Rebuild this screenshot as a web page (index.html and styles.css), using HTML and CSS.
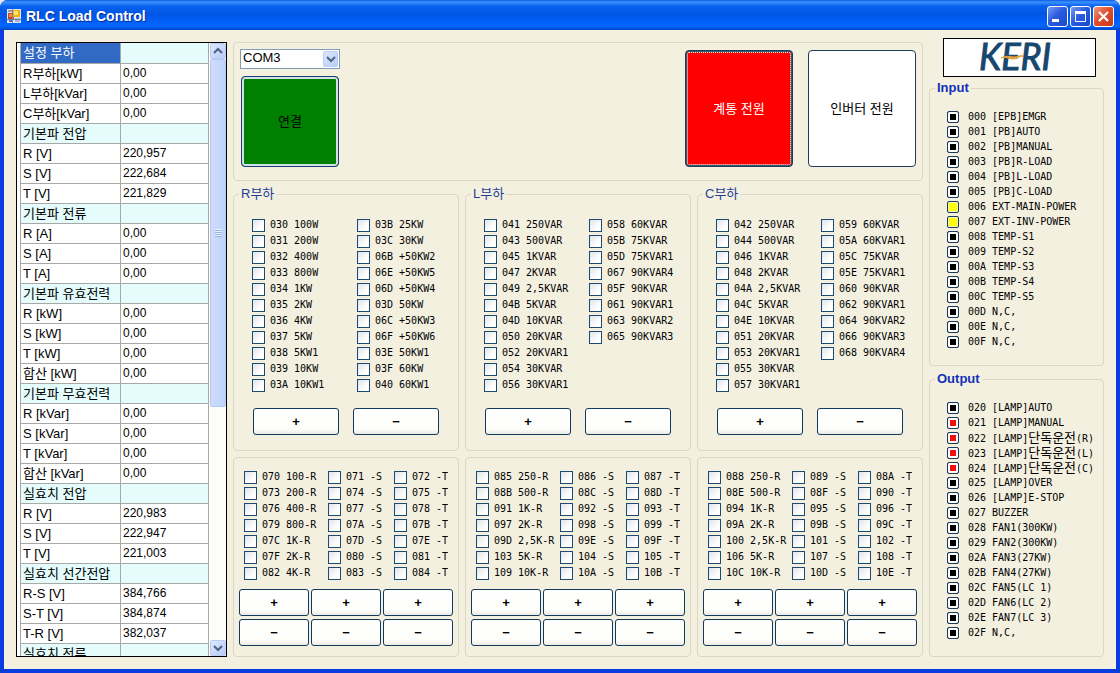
FILE: index.html
```html
<!DOCTYPE html>
<html lang="ko">
<head>
<meta charset="utf-8">
<title>RLC Load Control</title>
<link rel="stylesheet" href="styles.css">
</head>
<body>
<div class="window">
  <header class="titlebar">
    <svg class="app-icon" viewBox="0 0 14 14" aria-hidden="true">
      <rect width="14" height="14" fill="#dfe6f2"/>
      <rect x="1" y="4" width="6" height="6" fill="#c8401c"/>
      <rect x="2" y="5" width="3" height="3" fill="#f08a50"/>
      <rect x="6" y="1" width="7" height="7" fill="#f0b400"/>
      <rect x="7" y="2" width="4" height="4" fill="#ffe27a"/>
      <rect x="1" y="1" width="4" height="2" fill="#8e9cb8"/>
      <rect x="2" y="11" width="4" height="2" fill="#4a6fc0"/>
      <rect x="8" y="9" width="5" height="4" fill="#a8b4cc"/>
      <path d="M5.5 0v14M0 10.500h14" stroke="#7484a8" fill="none"/>
    </svg>
    <h1 class="title">RLC Load Control</h1>
    <div class="window-buttons">
      <button class="win-btn" type="button" aria-label="Minimize"><svg viewBox="0 0 19 19"><rect x="4" y="12" width="7" height="3" fill="#fff"/></svg></button>
      <button class="win-btn" type="button" aria-label="Maximize"><svg viewBox="0 0 19 19"><path d="M4.5 4v10.500h10V4" fill="none" stroke="#fff"/><rect x="4" y="4" width="11" height="3" fill="#fff"/></svg></button>
      <button class="win-btn close" type="button" aria-label="Close"><svg viewBox="0 0 19 19"><path d="M5 5l9 9M14 5l-9 9" fill="none" stroke="#fff" stroke-width="2.2"/></svg></button>
    </div>
  </header>

  <main class="content">
    <section class="grid-view">
      <div class="table-pane">
        <table class="measures">
          <tbody>
            <tr class="head selected"><td>설정 부하</td><td></td></tr>
            <tr><td>R부하[kW]</td><td>0,00</td></tr>
            <tr><td>L부하[kVar]</td><td>0,00</td></tr>
            <tr><td>C부하[kVar]</td><td>0,00</td></tr>
            <tr class="head"><td>기본파 전압</td><td></td></tr>
            <tr><td>R [V]</td><td>220,957</td></tr>
            <tr><td>S [V]</td><td>222,684</td></tr>
            <tr><td>T [V]</td><td>221,829</td></tr>
            <tr class="head"><td>기본파 전류</td><td></td></tr>
            <tr><td>R [A]</td><td>0,00</td></tr>
            <tr><td>S [A]</td><td>0,00</td></tr>
            <tr><td>T [A]</td><td>0,00</td></tr>
            <tr class="head"><td>기본파 유효전력</td><td></td></tr>
            <tr><td>R [kW]</td><td>0,00</td></tr>
            <tr><td>S [kW]</td><td>0,00</td></tr>
            <tr><td>T [kW]</td><td>0,00</td></tr>
            <tr><td>합산 [kW]</td><td>0,00</td></tr>
            <tr class="head"><td>기본파 무효전력</td><td></td></tr>
            <tr><td>R [kVar]</td><td>0,00</td></tr>
            <tr><td>S [kVar]</td><td>0,00</td></tr>
            <tr><td>T [kVar]</td><td>0,00</td></tr>
            <tr><td>합산 [kVar]</td><td>0,00</td></tr>
            <tr class="head"><td>실효치 전압</td><td></td></tr>
            <tr><td>R [V]</td><td>220,983</td></tr>
            <tr><td>S [V]</td><td>222,947</td></tr>
            <tr><td>T [V]</td><td>221,003</td></tr>
            <tr class="head"><td>실효치 선간전압</td><td></td></tr>
            <tr><td>R-S [V]</td><td>384,766</td></tr>
            <tr><td>S-T [V]</td><td>384,874</td></tr>
            <tr><td>T-R [V]</td><td>382,037</td></tr>
            <tr class="head"><td>실효치 전류</td><td></td></tr>
          </tbody>
        </table>
      </div>
      <div class="scrollbar">
        <button class="scroll-btn" type="button" aria-label="Scroll up"><svg viewBox="0 0 10 8"><path d="M1 6l4-4 4 4" fill="none" stroke="#4d6185" stroke-width="2"/></svg></button>
        <div class="thumb"><span class="grip"></span></div>
        <div class="track"></div>
        <button class="scroll-btn" type="button" aria-label="Scroll down"><svg viewBox="0 0 10 8"><path d="M1 2l4 4 4-4" fill="none" stroke="#4d6185" stroke-width="2"/></svg></button>
      </div>
    </section>

    <div class="center">
      <section class="panel power">
        <div class="connect">
          <div class="combo">
            <select aria-label="COM port"><option>COM3</option></select>
            <span class="combo-arrow"><svg viewBox="0 0 10 8"><path d="M1 2l4 4 4-4" fill="none" stroke="#4d6185" stroke-width="2"/></svg></span>
          </div>
          <button class="big green" type="button">연결</button>
        </div>
        <div class="sources">
          <button class="big red" type="button">계통 전원</button>
          <button class="big white" type="button">인버터 전원</button>
        </div>
      </section>

      <div class="loads">
        <fieldset class="panel group">
          <legend>R부하</legend>
          <div class="two-cols">
            <div>
              <label class="opt"><input type="checkbox">030 100W</label>
              <label class="opt"><input type="checkbox">031 200W</label>
              <label class="opt"><input type="checkbox">032 400W</label>
              <label class="opt"><input type="checkbox">033 800W</label>
              <label class="opt"><input type="checkbox">034 1KW</label>
              <label class="opt"><input type="checkbox">035 2KW</label>
              <label class="opt"><input type="checkbox">036 4KW</label>
              <label class="opt"><input type="checkbox">037 5KW</label>
              <label class="opt"><input type="checkbox">038 5KW1</label>
              <label class="opt"><input type="checkbox">039 10KW</label>
              <label class="opt"><input type="checkbox">03A 10KW1</label>
            </div>
            <div>
              <label class="opt"><input type="checkbox">03B 25KW</label>
              <label class="opt"><input type="checkbox">03C 30KW</label>
              <label class="opt"><input type="checkbox">06B +50KW2</label>
              <label class="opt"><input type="checkbox">06E +50KW5</label>
              <label class="opt"><input type="checkbox">06D +50KW4</label>
              <label class="opt"><input type="checkbox">03D 50KW</label>
              <label class="opt"><input type="checkbox">06C +50KW3</label>
              <label class="opt"><input type="checkbox">06F +50KW6</label>
              <label class="opt"><input type="checkbox">03E 50KW1</label>
              <label class="opt"><input type="checkbox">03F 60KW</label>
              <label class="opt"><input type="checkbox">040 60KW1</label>
            </div>
          </div>
          <div class="pair"><button class="step" type="button">+</button><button class="step" type="button">−</button></div>
        </fieldset>

        <fieldset class="panel group">
          <legend>L부하</legend>
          <div class="two-cols">
            <div>
              <label class="opt"><input type="checkbox">041 250VAR</label>
              <label class="opt"><input type="checkbox">043 500VAR</label>
              <label class="opt"><input type="checkbox">045 1KVAR</label>
              <label class="opt"><input type="checkbox">047 2KVAR</label>
              <label class="opt"><input type="checkbox">049 2,5KVAR</label>
              <label class="opt"><input type="checkbox">04B 5KVAR</label>
              <label class="opt"><input type="checkbox">04D 10KVAR</label>
              <label class="opt"><input type="checkbox">050 20KVAR</label>
              <label class="opt"><input type="checkbox">052 20KVAR1</label>
              <label class="opt"><input type="checkbox">054 30KVAR</label>
              <label class="opt"><input type="checkbox">056 30KVAR1</label>
            </div>
            <div>
              <label class="opt"><input type="checkbox">058 60KVAR</label>
              <label class="opt"><input type="checkbox">05B 75KVAR</label>
              <label class="opt"><input type="checkbox">05D 75KVAR1</label>
              <label class="opt"><input type="checkbox">067 90KVAR4</label>
              <label class="opt"><input type="checkbox">05F 90KVAR</label>
              <label class="opt"><input type="checkbox">061 90KVAR1</label>
              <label class="opt"><input type="checkbox">063 90KVAR2</label>
              <label class="opt"><input type="checkbox">065 90KVAR3</label>
            </div>
          </div>
          <div class="pair"><button class="step" type="button">+</button><button class="step" type="button">−</button></div>
        </fieldset>

        <fieldset class="panel group">
          <legend>C부하</legend>
          <div class="two-cols">
            <div>
              <label class="opt"><input type="checkbox">042 250VAR</label>
              <label class="opt"><input type="checkbox">044 500VAR</label>
              <label class="opt"><input type="checkbox">046 1KVAR</label>
              <label class="opt"><input type="checkbox">048 2KVAR</label>
              <label class="opt"><input type="checkbox">04A 2,5KVAR</label>
              <label class="opt"><input type="checkbox">04C 5KVAR</label>
              <label class="opt"><input type="checkbox">04E 10KVAR</label>
              <label class="opt"><input type="checkbox">051 20KVAR</label>
              <label class="opt"><input type="checkbox">053 20KVAR1</label>
              <label class="opt"><input type="checkbox">055 30KVAR</label>
              <label class="opt"><input type="checkbox">057 30KVAR1</label>
            </div>
            <div>
              <label class="opt"><input type="checkbox">059 60KVAR</label>
              <label class="opt"><input type="checkbox">05A 60KVAR1</label>
              <label class="opt"><input type="checkbox">05C 75KVAR</label>
              <label class="opt"><input type="checkbox">05E 75KVAR1</label>
              <label class="opt"><input type="checkbox">060 90KVAR</label>
              <label class="opt"><input type="checkbox">062 90KVAR1</label>
              <label class="opt"><input type="checkbox">064 90KVAR2</label>
              <label class="opt"><input type="checkbox">066 90KVAR3</label>
              <label class="opt"><input type="checkbox">068 90KVAR4</label>
            </div>
          </div>
          <div class="pair"><button class="step" type="button">+</button><button class="step" type="button">−</button></div>
        </fieldset>
      </div>

      <div class="loads phases">
        <section class="panel phase">
          <div class="three-cols">
            <div>
              <label class="opt"><input type="checkbox">070 100-R</label>
              <label class="opt"><input type="checkbox">073 200-R</label>
              <label class="opt"><input type="checkbox">076 400-R</label>
              <label class="opt"><input type="checkbox">079 800-R</label>
              <label class="opt"><input type="checkbox">07C 1K-R</label>
              <label class="opt"><input type="checkbox">07F 2K-R</label>
              <label class="opt"><input type="checkbox">082 4K-R</label>
            </div>
            <div>
              <label class="opt"><input type="checkbox">071 -S</label>
              <label class="opt"><input type="checkbox">074 -S</label>
              <label class="opt"><input type="checkbox">077 -S</label>
              <label class="opt"><input type="checkbox">07A -S</label>
              <label class="opt"><input type="checkbox">07D -S</label>
              <label class="opt"><input type="checkbox">080 -S</label>
              <label class="opt"><input type="checkbox">083 -S</label>
            </div>
            <div>
              <label class="opt"><input type="checkbox">072 -T</label>
              <label class="opt"><input type="checkbox">075 -T</label>
              <label class="opt"><input type="checkbox">078 -T</label>
              <label class="opt"><input type="checkbox">07B -T</label>
              <label class="opt"><input type="checkbox">07E -T</label>
              <label class="opt"><input type="checkbox">081 -T</label>
              <label class="opt"><input type="checkbox">084 -T</label>
            </div>
          </div>
          <div class="six">
            <button class="step" type="button">+</button><button class="step" type="button">+</button><button class="step" type="button">+</button>
            <button class="step" type="button">−</button><button class="step" type="button">−</button><button class="step" type="button">−</button>
          </div>
        </section>

        <section class="panel phase">
          <div class="three-cols">
            <div>
              <label class="opt"><input type="checkbox">085 250-R</label>
              <label class="opt"><input type="checkbox">08B 500-R</label>
              <label class="opt"><input type="checkbox">091 1K-R</label>
              <label class="opt"><input type="checkbox">097 2K-R</label>
              <label class="opt"><input type="checkbox">09D 2,5K-R</label>
              <label class="opt"><input type="checkbox">103 5K-R</label>
              <label class="opt"><input type="checkbox">109 10K-R</label>
            </div>
            <div>
              <label class="opt"><input type="checkbox">086 -S</label>
              <label class="opt"><input type="checkbox">08C -S</label>
              <label class="opt"><input type="checkbox">092 -S</label>
              <label class="opt"><input type="checkbox">098 -S</label>
              <label class="opt"><input type="checkbox">09E -S</label>
              <label class="opt"><input type="checkbox">104 -S</label>
              <label class="opt"><input type="checkbox">10A -S</label>
            </div>
            <div>
              <label class="opt"><input type="checkbox">087 -T</label>
              <label class="opt"><input type="checkbox">08D -T</label>
              <label class="opt"><input type="checkbox">093 -T</label>
              <label class="opt"><input type="checkbox">099 -T</label>
              <label class="opt"><input type="checkbox">09F -T</label>
              <label class="opt"><input type="checkbox">105 -T</label>
              <label class="opt"><input type="checkbox">10B -T</label>
            </div>
          </div>
          <div class="six">
            <button class="step" type="button">+</button><button class="step" type="button">+</button><button class="step" type="button">+</button>
            <button class="step" type="button">−</button><button class="step" type="button">−</button><button class="step" type="button">−</button>
          </div>
        </section>

        <section class="panel phase">
          <div class="three-cols">
            <div>
              <label class="opt"><input type="checkbox">088 250-R</label>
              <label class="opt"><input type="checkbox">08E 500-R</label>
              <label class="opt"><input type="checkbox">094 1K-R</label>
              <label class="opt"><input type="checkbox">09A 2K-R</label>
              <label class="opt"><input type="checkbox">100 2,5K-R</label>
              <label class="opt"><input type="checkbox">106 5K-R</label>
              <label class="opt"><input type="checkbox">10C 10K-R</label>
            </div>
            <div>
              <label class="opt"><input type="checkbox">089 -S</label>
              <label class="opt"><input type="checkbox">08F -S</label>
              <label class="opt"><input type="checkbox">095 -S</label>
              <label class="opt"><input type="checkbox">09B -S</label>
              <label class="opt"><input type="checkbox">101 -S</label>
              <label class="opt"><input type="checkbox">107 -S</label>
              <label class="opt"><input type="checkbox">10D -S</label>
            </div>
            <div>
              <label class="opt"><input type="checkbox">08A -T</label>
              <label class="opt"><input type="checkbox">090 -T</label>
              <label class="opt"><input type="checkbox">096 -T</label>
              <label class="opt"><input type="checkbox">09C -T</label>
              <label class="opt"><input type="checkbox">102 -T</label>
              <label class="opt"><input type="checkbox">108 -T</label>
              <label class="opt"><input type="checkbox">10E -T</label>
            </div>
          </div>
          <div class="six">
            <button class="step" type="button">+</button><button class="step" type="button">+</button><button class="step" type="button">+</button>
            <button class="step" type="button">−</button><button class="step" type="button">−</button><button class="step" type="button">−</button>
          </div>
        </section>
      </div>
    </div>

    <aside class="side">
      <div class="logo">
        <svg viewBox="0 0 151 37" role="img" aria-label="KERI">
          <text class="logo-text" x="35" y="31">KERI</text>
          <path d="M57 19c5-3 9-1 13-1s5-2 9-1c-4 0-5 3-10 3s-7-3-12-1z" fill="#e8a33c" stroke="#e8a33c"/>
        </svg>
      </div>
      <fieldset class="panel io">
        <legend>Input</legend>
        <label class="lamp"><input type="checkbox" checked>000 [EPB]EMGR</label>
        <label class="lamp"><input type="checkbox" checked>001 [PB]AUTO</label>
        <label class="lamp"><input type="checkbox" checked>002 [PB]MANUAL</label>
        <label class="lamp"><input type="checkbox" checked>003 [PB]R-LOAD</label>
        <label class="lamp"><input type="checkbox" checked>004 [PB]L-LOAD</label>
        <label class="lamp"><input type="checkbox" checked>005 [PB]C-LOAD</label>
        <label class="lamp yellow"><input type="checkbox" checked>006 EXT-MAIN-POWER</label>
        <label class="lamp yellow"><input type="checkbox" checked>007 EXT-INV-POWER</label>
        <label class="lamp"><input type="checkbox" checked>008 TEMP-S1</label>
        <label class="lamp"><input type="checkbox" checked>009 TEMP-S2</label>
        <label class="lamp"><input type="checkbox" checked>00A TEMP-S3</label>
        <label class="lamp"><input type="checkbox" checked>00B TEMP-S4</label>
        <label class="lamp"><input type="checkbox" checked>00C TEMP-S5</label>
        <label class="lamp"><input type="checkbox" checked>00D N,C,</label>
        <label class="lamp"><input type="checkbox" checked>00E N,C,</label>
        <label class="lamp"><input type="checkbox" checked>00F N,C,</label>
      </fieldset>
      <fieldset class="panel io">
        <legend>Output</legend>
        <label class="lamp"><input type="checkbox" checked>020 [LAMP]AUTO</label>
        <label class="lamp alert"><input type="checkbox" checked>021 [LAMP]MANUAL</label>
        <label class="lamp alert"><input type="checkbox" checked><span>022 [LAMP]<span class="ko">단독운전</span>(R)</span></label>
        <label class="lamp alert"><input type="checkbox" checked><span>023 [LAMP]<span class="ko">단독운전</span>(L)</span></label>
        <label class="lamp alert"><input type="checkbox" checked><span>024 [LAMP]<span class="ko">단독운전</span>(C)</span></label>
        <label class="lamp"><input type="checkbox" checked>025 [LAMP]OVER</label>
        <label class="lamp"><input type="checkbox" checked>026 [LAMP]E-STOP</label>
        <label class="lamp"><input type="checkbox" checked>027 BUZZER</label>
        <label class="lamp"><input type="checkbox" checked>028 FAN1(300KW)</label>
        <label class="lamp"><input type="checkbox" checked>029 FAN2(300KW)</label>
        <label class="lamp"><input type="checkbox" checked>02A FAN3(27KW)</label>
        <label class="lamp"><input type="checkbox" checked>02B FAN4(27KW)</label>
        <label class="lamp"><input type="checkbox" checked>02C FAN5(LC 1)</label>
        <label class="lamp"><input type="checkbox" checked>02D FAN6(LC 2)</label>
        <label class="lamp"><input type="checkbox" checked>02E FAN7(LC 3)</label>
        <label class="lamp"><input type="checkbox" checked>02F N,C,</label>
      </fieldset>
    </aside>
  </main>
</div>
</body>
</html>
```

FILE: styles.css
```css
* { box-sizing: border-box; }

body {
  margin: 0;
  background: #e4e8f0;
  color: #000;
  font: 13px/16px "Liberation Sans", "Noto Sans CJK KR", sans-serif;
}

button, select, input { font: inherit; color: inherit; margin: 0; }
button { padding: 0; }

.window {
  display: flex;
  flex-direction: column;
  height: 100vh;
  min-height: 673px;
  border-radius: 8px 8px 0 0;
  overflow: hidden;
  background: #0a3ce0;
}

/* Title bar */
.titlebar {
  display: flex;
  align-items: center;
  flex: none;
  height: 30px;
  padding: 2px 6px 0 7px;
  background: linear-gradient(#0a5be0 0, #3c92ff 2px, #0a62ee 6px, #0055e5 14px, #0060fa 22px, #0066ff 26px, #0046c8 30px);
}
.app-icon { width: 14px; height: 14px; margin-right: 5px; }
.title {
  flex: 1;
  margin: 0;
  color: #fff;
  font-size: 14px;
  line-height: 18px;
  text-shadow: 1px 1px 0 #0a2c90;
}
.window-buttons { display: flex; gap: 2px; }
.win-btn {
  width: 21px;
  height: 21px;
  border: 1px solid #fff;
  border-radius: 3px;
  background: linear-gradient(135deg, #7a9cf0, #2a5ce0 45%, #1c48c8);
}
.win-btn.close { background: linear-gradient(135deg, #f09a80, #e05030 45%, #c83818); }
.win-btn svg { display: block; width: 19px; height: 19px; }

/* Client area */
.content {
  flex: 1;
  display: grid;
  grid-template-columns: 211px minmax(0, 1fr) 175px;
  grid-template-rows: minmax(0, 1fr);
  gap: 6px;
  min-height: 0;
  margin: 0 4px 4px;
  padding: 8px 12px 12px;
  background: #f4f0e0;
}

/* Measurement table */
.grid-view {
  display: flex;
  min-height: 0;
  margin-top: 4px;
  border: 1px solid #000;
  background: #fff;
}
.table-pane { flex: 1; overflow: hidden; padding: 0 1px 0 3px; }
.measures { width: 100%; border-collapse: collapse; table-layout: fixed; }
.measures td {
  height: 20px;
  padding: 0 2px;
  border: 1px solid #a8a8a4;
  border-top: 0;
  line-height: 19px;
  white-space: nowrap;
}
.measures td:first-child { width: 100px; }
.measures td:last-child { font-size: 12px; }
.measures .head td { background: #e4fcfc; }
.measures .selected td:first-child { background: #316ac5; color: #fff; }

.scrollbar { display: flex; flex-direction: column; flex: none; width: 16px; background: #fdfdfa; }
.scroll-btn, .combo-arrow {
  display: grid;
  place-items: center;
  flex: none;
  border: 1px solid #b8ccf4;
  border-radius: 2px;
  background: linear-gradient(135deg, #dce8ff, #b8ccf8);
}
.scroll-btn { height: 16px; }
.scroll-btn svg, .combo-arrow svg { width: 10px; height: 8px; }
.thumb {
  flex: 348 1 0;
  display: grid;
  place-items: center;
  border: 1px solid #b4c8f4;
  border-radius: 2px;
  background: linear-gradient(90deg, #d0dcfc, #bcd4fc);
}
.track { flex: 234 1 0; }
.grip {
  width: 7px;
  height: 8px;
  background: repeating-linear-gradient(#eef4ff 0 1px, #98b0e8 1px 2px);
}

/* Panels */
.panel {
  min-width: 0;
  margin: 0;
  border: 1px solid #dcd6c2;
  border-radius: 4px;
}
.center { display: flex; flex-direction: column; gap: 6px; margin-top: 4px; }

.power { display: flex; justify-content: space-between; padding: 6px 6px 13px; }
.connect { display: flex; flex-direction: column; gap: 7px; width: 100px; }
.combo { display: grid; grid-template-columns: 1fr 17px; align-items: center; }
.combo select {
  grid-area: 1 / 1 / 2 / 3;
  appearance: none;
  width: 100%;
  height: 20px;
  padding: 0 2px 2px;
  border: 1px solid #7f9db9;
  border-radius: 0;
  background: #fff;
}
.combo-arrow { grid-area: 1 / 2; width: 15px; height: 16px; pointer-events: none; }

.big {
  border: 1px solid #1c3c5c;
  border-radius: 4px;
}
.green {
  flex: 1;
  margin: 0 1px;
  background: #008000;
  border-color: #1c3c70;
  box-shadow: inset 0 0 0 2px #cfe2e8;
}
.sources { display: flex; gap: 15px; }
.sources .big { width: 108px; height: 117px; margin-top: 1px; }
.red { background: #f00; color: #fff; box-shadow: inset 0 0 0 1px #2a6070; outline: 1px dotted #fff; outline-offset: -3px; }
.white { background: #fff; }

.loads { display: grid; grid-template-columns: repeat(3, minmax(0, 1fr)); gap: 6px; }
.group { padding: 16px 19px 15px 18px; }
.group legend { padding: 0 2px; margin-left: -13px; color: #1c3f94; line-height: 14px; }
.two-cols { display: grid; grid-template-columns: 105px 1fr; }
.three-cols { display: grid; grid-template-columns: 84px 66px 1fr; padding-left: 5px; }
.pair { display: grid; grid-template-columns: 1fr 1fr; gap: 14px; margin-top: 15px; padding-left: 1px; }
.phase { padding: 11px 5px 10px; }
.six { display: grid; grid-template-columns: repeat(3, 1fr); gap: 3px 2px; margin-top: 8px; }

.opt, .lamp {
  display: flex;
  align-items: center;
  font-family: "DejaVu Sans Mono", "Noto Sans CJK KR", monospace;
  font-size: 10px;
  white-space: nowrap;
}
.opt { gap: 5px; height: 16px; }
.opt input {
  appearance: none;
  flex: none;
  width: 13px;
  height: 13px;
  border: 1px solid #1c4a70;
  background: linear-gradient(135deg, #e0e4e8, #fff 70%);
}
.step {
  height: 27px;
  border: 1px solid #123a5c;
  border-radius: 3px;
  background: linear-gradient(#fff, #fdfdfa 80%, #ecebe4);
  font-weight: bold;
}

/* Right column */
.side { display: flex; flex-direction: column; }
.logo {
  height: 39px;
  margin: 0 8px 3px 14px;
  border: 1px solid #000;
  background: #fff;
}
.logo svg { display: block; width: 100%; height: 100%; overflow: visible; }
.logo-text { font: italic 36px Lato, sans-serif; fill: #17466e; stroke: #17466e; stroke-width: 1px; }
.io { padding: 13px 0 16px 17px; }
.io + .io { margin-top: 5px; }
.io legend { padding: 0 2px; margin-left: -12px; color: #1230b8; font-weight: bold; line-height: 16px; }
.lamp { gap: 9px; height: 15px; line-height: 15px; }
.lamp input {
  appearance: none;
  flex: none;
  width: 12px;
  height: 12px;
  border: 1px solid #1c3a5c;
  border-radius: 2px;
  background: #000;
  box-shadow: inset 0 0 0 2px #fff;
}
.lamp.yellow input { background: #ff0; box-shadow: inset 0 0 0 1px #f4f4c0; }
.lamp.alert input { background: #f01010; }
.ko { font-size: 13px; }
```
